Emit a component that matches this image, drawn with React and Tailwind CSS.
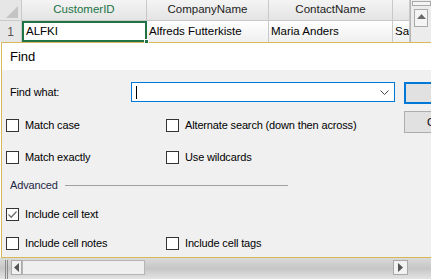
import React from 'react';

const Check = ({ checked, label, className = '' }) => (
  <div className={`flex items-center h-[13px] ${className}`}>
    <span className="w-[13px] h-[13px] border border-[#333] bg-white flex items-center justify-center shrink-0">
      {checked && (
        <svg width="11" height="11" viewBox="0 0 11 11">
          <path d="M1.5 5.5 L4.2 8.2 L9.5 2.5" fill="none" stroke="#6e6e6e" strokeWidth="1.3" />
        </svg>
      )}
    </span>
    <span className="ml-[6px] text-[11px] leading-none tracking-[-0.15px] text-black whitespace-nowrap">{label}</span>
  </div>
);

const HeaderCell = ({ w, children, active }) => (
  <div
    className={`${w} h-full flex items-center justify-center border-r border-[#c9c9c9] bg-gradient-to-b from-[#f4f4f4] to-[#e4e4e4] text-[11.5px] whitespace-nowrap overflow-hidden ${
      active ? 'text-[#217346]' : 'text-[#222]'
    }`}
  >
    {children}
  </div>
);

const DataCell = ({ w, children }) => (
  <div className={`${w} h-full flex items-center pl-[2px] border-r border-[#c9c9c9] bg-gradient-to-b from-white to-[#efefef] text-[11.5px] text-black whitespace-nowrap overflow-hidden`}>
    {children}
  </div>
);

export default function App() {
  return (
    <div className="w-[431px] h-[279px] overflow-hidden bg-white flex flex-col font-['Liberation_Sans',Arial,sans-serif]">
      {/* grid strip */}
      <div className="h-[42px] flex shrink-0">
        <div className="flex-1 flex flex-col">
          <div className="h-[21px] flex border-b border-[#c9c9c9]">
            <div className="w-[22px] h-full border-r border-[#c9c9c9] bg-[#e6e6e6] flex items-end justify-end pr-[3px] pb-[2px]">
              <svg width="12" height="12" viewBox="0 0 12 12">
                <path d="M12 0 L12 12 L0 12 Z" fill="#c4c4c4" />
              </svg>
            </div>
            <HeaderCell w="w-[125px]" active>CustomerID</HeaderCell>
            <HeaderCell w="w-[122px]">CompanyName</HeaderCell>
            <HeaderCell w="w-[124px]">ContactName</HeaderCell>
            <HeaderCell w="w-[17px]"></HeaderCell>
          </div>
          <div className="h-[21px] flex">
            <div className="w-[22px] h-full border-r border-[#c9c9c9] bg-[#e6e6e6] flex items-center justify-center text-[12px] text-[#555]">
              1
            </div>
            <div className="w-[125px] h-full relative">
              <div className="h-full border-2 border-[#217346] bg-white flex items-center pl-[2px] text-[11.5px] text-black">
                ALFKI
              </div>
              <span className="absolute right-[-2px] bottom-[-2px] w-[5px] h-[5px] bg-[#217346] border border-white" />
            </div>
            <DataCell w="w-[122px]">Alfreds Futterkiste</DataCell>
            <DataCell w="w-[124px]">Maria Anders</DataCell>
            <DataCell w="w-[17px]">Sa</DataCell>
          </div>
        </div>
        {/* vertical scrollbar */}
        <div className="w-[21px] h-full bg-[#ececec] border-l border-[#b5b5b5] flex flex-col items-center">
          <div className="mt-[1px] w-[19px] h-[5px] border border-[#a9a9a9] bg-[#f4f4f4]" />
          <div className="mt-[3px] w-[14px] h-[18px] border border-[#a9a9a9] bg-[#f4f4f4] flex items-start justify-center pt-[4px]">
            <svg width="9" height="5" viewBox="0 0 9 5">
              <path d="M0 5 L4.5 0 L9 5 Z" fill="#6a6a6a" />
            </svg>
          </div>
        </div>
      </div>

      {/* Find dialog */}
      <div className="h-[216px] shrink-0 flex flex-col border-t border-b border-l border-[#d9b85a] ml-[1px] w-[520px]">
        <div className="h-[27px] bg-white flex items-center pl-[8px] text-[13px] text-black">Find</div>
        <div className="flex-1 bg-[#f0f0f0] flex">
          <div className="w-[402px] shrink-0 flex flex-col">
            <div className="mt-[12px] h-[22px] flex items-start">
              <span className="w-[129px] pl-[8px] h-[20px] flex items-center text-[11px] tracking-[-0.15px] text-black">Find what:</span>
              <div className="w-[264px] h-[20px] border border-[#0078d7] bg-white flex items-center justify-between pl-[4px] pr-[5px]">
                <span className="w-[1px] h-[13px] bg-black" />
                <svg width="9" height="5" viewBox="0 0 9 5">
                  <path d="M0.5 0.5 L4.5 4.5 L8.5 0.5" fill="none" stroke="#444" strokeWidth="1" />
                </svg>
              </div>
            </div>
            <div className="mt-[15px] flex pl-[4px]">
              <Check label="Match case" className="w-[160px]" />
              <Check label="Alternate search (down then across)" />
            </div>
            <div className="mt-[19px] flex pl-[4px]">
              <Check label="Match exactly" className="w-[160px]" />
              <Check label="Use wildcards" />
            </div>
            <div className="mt-[14px] h-[14px] flex items-center pl-[8px]">
              <span className="text-[11px] tracking-[-0.15px] text-[#1f2746] leading-none">Advanced</span>
              <span className="ml-[7px] w-[223px] h-[1px] bg-[#a0a0a0]" />
            </div>
            <div className="mt-[16px] flex pl-[4px]">
              <Check label="Include cell text" checked className="w-[160px]" />
            </div>
            <div className="mt-[16px] flex pl-[4px]">
              <Check label="Include cell notes" className="w-[160px]" />
              <Check label="Include cell tags" />
            </div>
          </div>
          <div className="shrink-0 flex flex-col">
            <div className="mt-[12px] w-[88px] h-[22px] border-2 border-[#0078d7] bg-[#e1e1e1] flex items-center justify-center text-[11px] text-black whitespace-nowrap">
              <span className="pl-[40px]">Find Next</span>
            </div>
            <div className="mt-[7px] w-[88px] h-[22px] border border-[#adadad] bg-[#e1e1e1] flex items-center pl-[22px] text-[11px] text-black">
              Close
            </div>
          </div>
        </div>
      </div>

      {/* horizontal scrollbar */}
      <div className="flex-1 flex bg-gradient-to-b from-[#dadada] via-[#c6c6c6] to-[#e4e4e4]">
        <div className="w-[11px] flex pl-[5px] pt-[2px] gap-[1px]">
          <span className="w-[1px] h-full bg-[#8a8a8a]" />
          <span className="w-[1px] h-full bg-[#8a8a8a]" />
        </div>
        <div className="mt-[2px] w-[11px] h-[15px] border border-[#a9a9a9] bg-[#f2f2f2] flex items-center justify-center">
          <svg width="5" height="9" viewBox="0 0 5 9">
            <path d="M5 0 L0 4.5 L5 9 Z" fill="#555" />
          </svg>
        </div>
        <div className="mt-[2px] w-[123px] h-[15px] border border-[#b5b5b5] bg-[#efefef]" />
        <div className="flex-1" />
        <div className="mt-[2px] w-[15px] h-[15px] border border-[#a9a9a9] bg-[#f2f2f2] flex items-center justify-center">
          <svg width="5" height="9" viewBox="0 0 5 9">
            <path d="M0 0 L5 4.5 L0 9 Z" fill="#555" />
          </svg>
        </div>
        <div className="w-[23px]" />
      </div>
    </div>
  );
}
